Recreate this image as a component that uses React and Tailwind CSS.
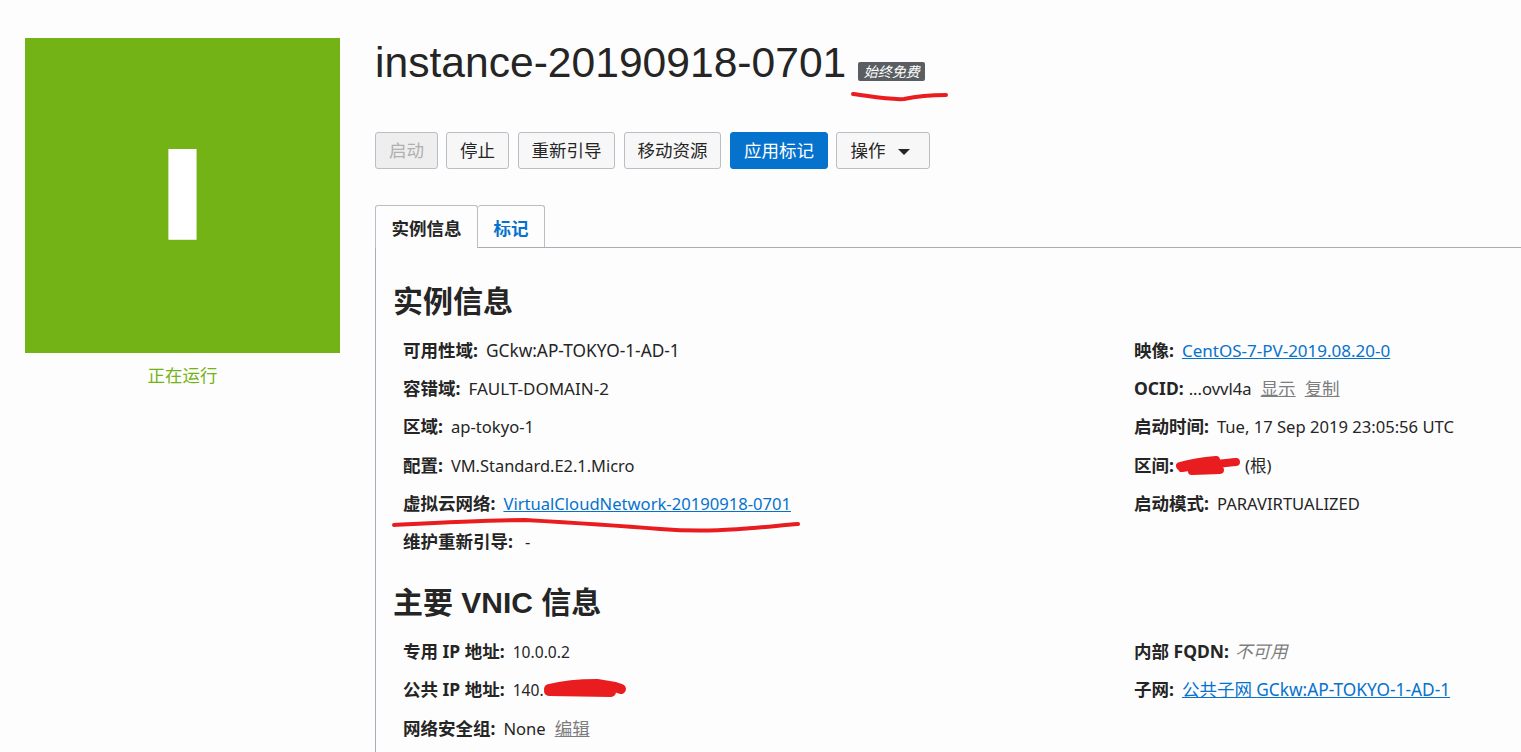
const BODY_FONT = "font-['Noto_Sans','Noto_Sans_CJK_SC',sans-serif]";

const LEFT_ROWS = [
  { label: '可用性域:', value: 'GCkw:AP-TOKYO-1-AD-1', className: 'text-[17.3px]' },
  { label: '容错域:', value: 'FAULT-DOMAIN-2', className: 'text-[17px]' },
  { label: '区域:', value: 'ap-tokyo-1' },
  { label: '配置:', value: 'VM.Standard.E2.1.Micro', className: 'text-[16.4px]' },
  { label: '虚拟云网络:', link: 'VirtualCloudNetwork-20190918-0701' },
  { label: '维护重新引导:', value: '-', className: 'ml-[4px]' }
];

const Row = ({ label, children }) => (
  <div className="h-[38.2px] whitespace-nowrap text-[16.6px] leading-[38.2px]">
    <span className="mr-[8px] text-[17.5px] font-bold">{label}</span>
    {children}
  </div>
);

const Link = ({ children, className = '' }) => <a className={`text-[#0572ce] underline ${className}`}>{children}</a>;
const Muted = ({ children }) => <a className="ml-[9px] text-[17.5px] text-[#7d7d7d] underline">{children}</a>;

const BUTTON_TONES = {
  normal: 'border-[#b9bdc5] bg-[#f7f7f8] text-[#252525]',
  disabled: 'border-[#b9bdc5] bg-[#eeeeee] text-[#b0b0b0]',
  primary: 'border-[#0572ce] bg-[#0572ce] text-white'
};

const Button = ({ children, tone = 'normal', className = '' }) => (
  <button className={`h-[37px] rounded-[3px] border text-center text-[17.5px] ${BUTTON_TONES[tone]} ${className}`}>
    {children}
  </button>
);

const Scribble = ({ className, width, height, d, strokeWidth = 4 }) => (
  <svg className={`absolute pointer-events-none ${className}`} width={width} height={height} viewBox={`0 0 ${width} ${height}`} fill="none">
    <path d={d} stroke="#e91c1f" strokeWidth={strokeWidth} strokeLinecap="round" strokeLinejoin="round" />
  </svg>
);

export default function App() {
  return (
    <div className={`relative h-[752px] w-[1521px] overflow-hidden bg-[#fdfdfd] text-[17.5px] text-[#252525] ${BODY_FONT}`}>
      <div className="flex h-full pt-[38px] pl-[25px]">
        {/* Status tile */}
        <div className="w-[315px] shrink-0">
          <div className="flex h-[315px] w-[315px] items-center justify-center bg-[#74b316] pb-[3px] font-['Liberation_Sans',sans-serif] text-[115px] font-bold leading-none text-white [-webkit-text-stroke:11.5px_#ffffff]">
            I
          </div>
          <div className="mt-[10px] text-center leading-[24px] text-[#74b316]">正在运行</div>
        </div>

        <div className="ml-[35px] flex min-w-0 flex-1 flex-col">
          {/* Title */}
          <div className="flex h-[50px] items-center whitespace-nowrap">
            <h1 className="-mt-[2px] font-['Liberation_Sans',sans-serif] text-[42.6px] leading-[50px] text-[#252525]">instance-20190918-0701</h1>
            <span className="ml-[12px] mt-[17px] h-[19px] w-[67px] rounded-[2px] bg-[#5a5e62] text-center text-[14px] italic leading-[19px] text-white">始终免费</span>
          </div>

          {/* Actions */}
          <div className="mt-[44px] flex gap-[8px]">
            <Button tone="disabled" className="w-[63px]">启动</Button>
            <Button className="w-[63px]">停止</Button>
            <Button className="ml-[1px] w-[97px]">重新引导</Button>
            <Button className="ml-[1px] w-[97px]">移动资源</Button>
            <Button tone="primary" className="ml-[1px] w-[98px]">应用标记</Button>
            <Button className="flex w-[94px] items-center justify-center gap-[12px] pr-[6px]">
              操作
              <span className="mt-[2px] border-x-[6px] border-t-[6px] border-x-transparent border-t-[#252525]" />
            </Button>
          </div>

          {/* Tabs */}
          <div className="mt-[36px] flex h-[43px] border-b border-[#a9adb5]">
            <div className="h-[43px] w-[103px] rounded-t-[3px] border border-b-0 border-[#b9bdc5] bg-[#fdfdfd] text-center font-bold leading-[44px]">实例信息</div>
            <div className="h-[42px] w-[67px] rounded-t-[3px] border border-b-0 border-l-0 border-[#b9bdc5] text-center font-bold leading-[44px] text-[#0572ce]">标记</div>
          </div>

          {/* Panel */}
          <div className="flex-1 border-l border-[#a9adb5] pl-[17px]">
            <h2 className="mt-[35px] font-['Liberation_Sans','Noto_Sans_CJK_SC',sans-serif] text-[30px] font-bold leading-[38px]">实例信息</h2>
            <div className="mt-[10px] flex pl-[10px]">
              <div className="w-[731px]">
                {LEFT_ROWS.map((row) => (
                  <Row key={row.label} label={row.label}>
                    {row.link ? <Link>{row.link}</Link> : <span className={row.className}>{row.value}</span>}
                  </Row>
                ))}
              </div>
              <div>
                <Row label="映像:"><Link className="text-[17px]">CentOS-7-PV-2019.08.20-0</Link></Row>
                <Row label="OCID:"><span className="-ml-[3px]">...ovvl4a</span><Muted>显示</Muted><Muted>复制</Muted></Row>
                <Row label="启动时间:">Tue, 17 Sep 2019 23:05:56 UTC</Row>
                <Row label="区间:"><span className="ml-[63px]">(根)</span></Row>
                <Row label="启动模式:">PARAVIRTUALIZED</Row>
              </div>
            </div>

            <h2 className="mt-[24px] font-['Liberation_Sans','Noto_Sans_CJK_SC',sans-serif] text-[30px] font-bold leading-[38px]">主要 VNIC 信息</h2>
            <div className="mt-[10px] flex pl-[10px]">
              <div className="w-[731px]">
                <Row label="专用 IP 地址:"><span className="text-[15.6px]">10.0.0.2</span></Row>
                <Row label="公共 IP 地址:"><span className="text-[15.6px]">140.</span></Row>
                <Row label="网络安全组:">None<Muted>编辑</Muted></Row>
              </div>
              <div>
                <Row label="内部 FQDN:"><span className="-ml-[2px] text-[17.5px] italic text-[#7d7d7d]">不可用</span></Row>
                <Row label="子网:"><Link><span className="text-[17.5px]">公共子网</span> <span className="text-[17.3px]">GCkw:AP-TOKYO-1-AD-1</span></Link></Row>
              </div>
            </div>
          </div>
        </div>
      </div>

      {/* Red marker annotations from the screenshot */}
      <Scribble className="left-[850px] top-[90px]" width={100} height={14} d="M3 4 C25 7 40 10 54 9 C68 6 80 5 96 5" />
      <Scribble className="left-[390px] top-[518px]" width={414} height={20} d="M4 7 C40 5 90 2 135 2 C170 4 220 7 270 11 C320 15 350 11 408 6" />
      <Scribble className="left-[1174px] top-[454px]" width={70} height={24} strokeWidth={8} d="M6 12 C20 8 30 7 42 6 M8 14 C26 11 44 10 62 8 M18 17 L46 16" />
      <Scribble className="left-[541px] top-[676px]" width={90} height={24} strokeWidth={10} d="M8 13 C24 9 38 8 56 8 L74 11 L80 13 M8 15 L70 16" />
    </div>
  );
}
